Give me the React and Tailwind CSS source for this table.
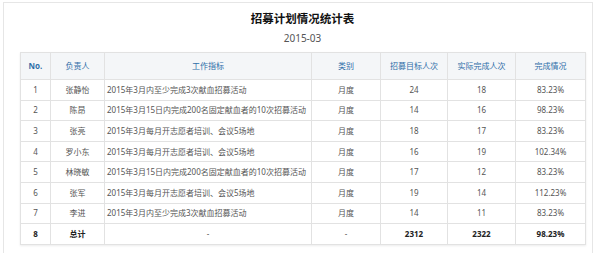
const rows = [
  { no: 1, name: "张静怡", task: "2015年3月内至少完成3次献血招募活动", type: "月度", target: 24, done: 18, rate: "83.23%" },
  { no: 2, name: "陈昂", task: "2015年3月15日内完成200名固定献血者的10次招募活动", type: "月度", target: 14, done: 16, rate: "98.23%" },
  { no: 3, name: "张亮", task: "2015年3月每月开志愿者培训、会议5场地", type: "月度", target: 18, done: 17, rate: "83.23%" },
  { no: 4, name: "罗小东", task: "2015年3月每月开志愿者培训、会议5场地", type: "月度", target: 16, done: 19, rate: "102.34%" },
  { no: 5, name: "林晓敏", task: "2015年3月15日内完成200名固定献血者的10次招募活动", type: "月度", target: 17, done: 12, rate: "83.23%" },
  { no: 6, name: "张军", task: "2015年3月每月开志愿者培训、会议5场地", type: "月度", target: 19, done: 14, rate: "112.23%" },
  { no: 7, name: "李进", task: "2015年3月内至少完成3次献血招募活动", type: "月度", target: 14, done: 11, rate: "83.23%" },
];

const font = { fontFamily: '"Noto Sans", "Noto Sans CJK SC", sans-serif' };

export default function App() {
  return (
    <div className="w-[605px] h-[253px] bg-white overflow-hidden" style={font}>
      <div className="ml-[3px] mt-[2px] w-[590px] h-[270px] border border-[#e6e6e6] pl-[16px] pr-[6px] pt-[7px]">
        <div className="w-[565px]">
          <h1 className="text-center text-[11.5px] leading-[18px] font-bold text-[#111]">招募计划情况统计表</h1>
          <p className="mt-[4px] text-center text-[10px] leading-[12px] text-[#555]">2015-03</p>
          <table className="mt-[8px] w-[565px] table-fixed border-collapse border border-[#dcdcdc] shadow-[0_1px_2px_rgba(0,0,0,0.08)] text-[8px] text-[#555]">
            <colgroup>
              <col className="w-[30px]" />
              <col className="w-[54px]" />
              <col className="w-[207px]" />
              <col className="w-[69px]" />
              <col className="w-[67px]" />
              <col className="w-[68px]" />
              <col className="w-[70px]" />
            </colgroup>
            <thead>
              <tr className="h-[27px] bg-[#f4f6f8] text-[#2f6ea8]">
                <th className="border border-[#e2e2e2] font-bold">No.</th>
                <th className="border border-[#e2e2e2] font-normal">负责人</th>
                <th className="border border-[#e2e2e2] font-normal">工作指标</th>
                <th className="border border-[#e2e2e2] font-normal">类别</th>
                <th className="border border-[#e2e2e2] font-normal">招募目标人次</th>
                <th className="border border-[#e2e2e2] font-normal">实际完成人次</th>
                <th className="border border-[#e2e2e2] font-normal">完成情况</th>
              </tr>
            </thead>
            <tbody>
              {rows.map((r) => (
                <tr key={r.no} className="h-[20.6px]">
                  <td className="border border-[#e2e2e2] text-center">{r.no}</td>
                  <td className="border border-[#e2e2e2] text-center">{r.name}</td>
                  <td className="border border-[#e2e2e2] pl-[2px] whitespace-nowrap overflow-hidden">{r.task}</td>
                  <td className="border border-[#e2e2e2] text-center">{r.type}</td>
                  <td className="border border-[#e2e2e2] text-center">{r.target}</td>
                  <td className="border border-[#e2e2e2] text-center">{r.done}</td>
                  <td className="border border-[#e2e2e2] text-center">{r.rate}</td>
                </tr>
              ))}
              <tr className="h-[20.6px]">
                <td className="border border-[#e2e2e2] text-center font-bold text-[#222]">8</td>
                <td className="border border-[#e2e2e2] text-center font-bold text-[#222]">总计</td>
                <td className="border border-[#e2e2e2] text-center">-</td>
                <td className="border border-[#e2e2e2] text-center">-</td>
                <td className="border border-[#e2e2e2] text-center font-bold text-[#222]">2312</td>
                <td className="border border-[#e2e2e2] text-center font-bold text-[#222]">2322</td>
                <td className="border border-[#e2e2e2] text-center font-bold text-[#222]">98.23%</td>
              </tr>
            </tbody>
          </table>
        </div>
      </div>
    </div>
  );
}
